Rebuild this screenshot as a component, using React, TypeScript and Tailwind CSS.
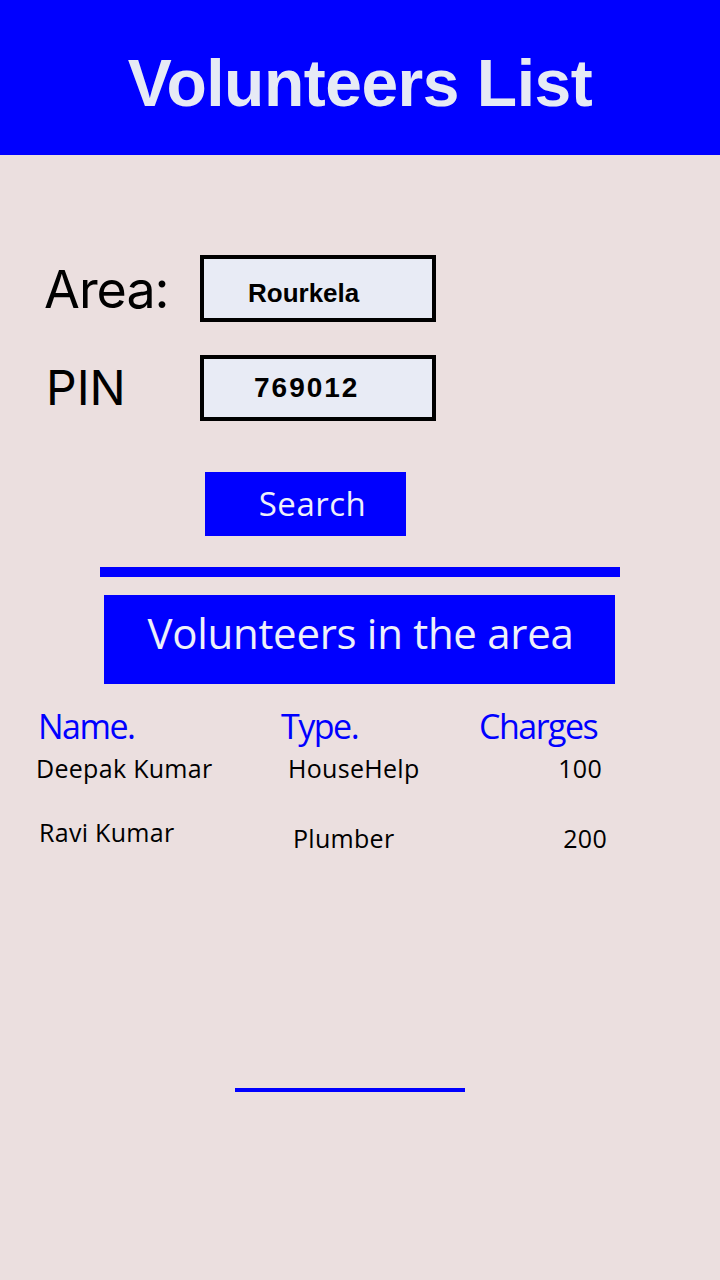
import React from "react";

const volunteers = [
  { name: "Deepak Kumar", type: "HouseHelp", charges: "100" },
  { name: "Ravi Kumar", type: "Plumber", charges: "200" },
];

export default function App() {
  return (
    <div className="w-[720px] h-[1280px] bg-[#ebdfdf] flex flex-col font-['Open_Sans',sans-serif]">
      <header className="h-[155px] bg-[#0000ff] flex items-center justify-center">
        <h1 className="text-[66px] font-bold text-[#e6eaf5] tracking-[-0.5px] font-['Liberation_Sans',sans-serif] pt-[12px]">
          Volunteers List
        </h1>
      </header>

      <div className="flex flex-col pt-[100px]">
        <div className="flex items-center h-[67px]">
          <span className="w-[200px] pl-[44px] text-[52px] text-black font-['Inter',sans-serif] tracking-[-1px] pt-[2px]">Area:</span>
          <div className="w-[236px] h-[67px] border-4 border-black bg-[#e8ebf5] flex items-center pl-[44px] pt-[9px]">
            <span className="text-[26px] font-bold text-black font-['Liberation_Sans',sans-serif]">Rourkela</span>
          </div>
        </div>
        <div className="flex items-center h-[66px] mt-[33px]">
          <span className="w-[200px] pl-[46px] text-[48px] text-black font-['Inter',sans-serif]">PIN</span>
          <div className="w-[236px] h-[66px] border-4 border-black bg-[#e8ebf5] flex items-center pl-[50px]">
            <span className="text-[28px] font-bold text-black tracking-[2px] font-['Liberation_Sans',sans-serif]">769012</span>
          </div>
        </div>

        <div className="pl-[205px] mt-[51px]">
          <button className="w-[201px] h-[64px] bg-[#0000ff] text-[#eef0fa] text-[33px] tracking-[0.5px] flex items-center justify-center pl-[14px]">
            Search
          </button>
        </div>

        <div className="ml-[100px] w-[520px] h-[10px] bg-[#0000ff] mt-[31px]" />

        <div className="ml-[104px] w-[511px] h-[89px] bg-[#0000ff] mt-[18px] flex items-center justify-center pb-[14px] pl-[2px]">
          <span className="text-[42px] text-[#eef0fa] tracking-[-0.3px]">Volunteers in the area</span>
        </div>

        <div className="flex pl-[38px] mt-[20px] text-[34px] text-[#0000ff] tracking-[-1.5px] leading-[44px]">
          <span className="w-[243px]">Name.</span>
          <span className="w-[198px]">Type.</span>
          <span>Charges</span>
        </div>

        <div className="flex w-[602px] text-[25px] tracking-[0.3px] text-black leading-[32px] mt-[4px]">
          <span className="w-[252px] ml-[36px]">{volunteers[0].name}</span>
          <span className="flex-1">{volunteers[0].type}</span>
          <span>{volunteers[0].charges}</span>
        </div>

        <div className="flex items-start w-[607px] text-[25px] tracking-[0.3px] text-black leading-[32px] mt-[32px]">
          <span className="w-[254px] ml-[39px]">{volunteers[1].name}</span>
          <span className="flex-1 pt-[6px]">{volunteers[1].type}</span>
          <span className="pt-[6px]">{volunteers[1].charges}</span>
        </div>

        <div className="ml-[235px] w-[230px] h-[4px] bg-[#0000ff] mt-[234px]" />
      </div>
    </div>
  );
}
